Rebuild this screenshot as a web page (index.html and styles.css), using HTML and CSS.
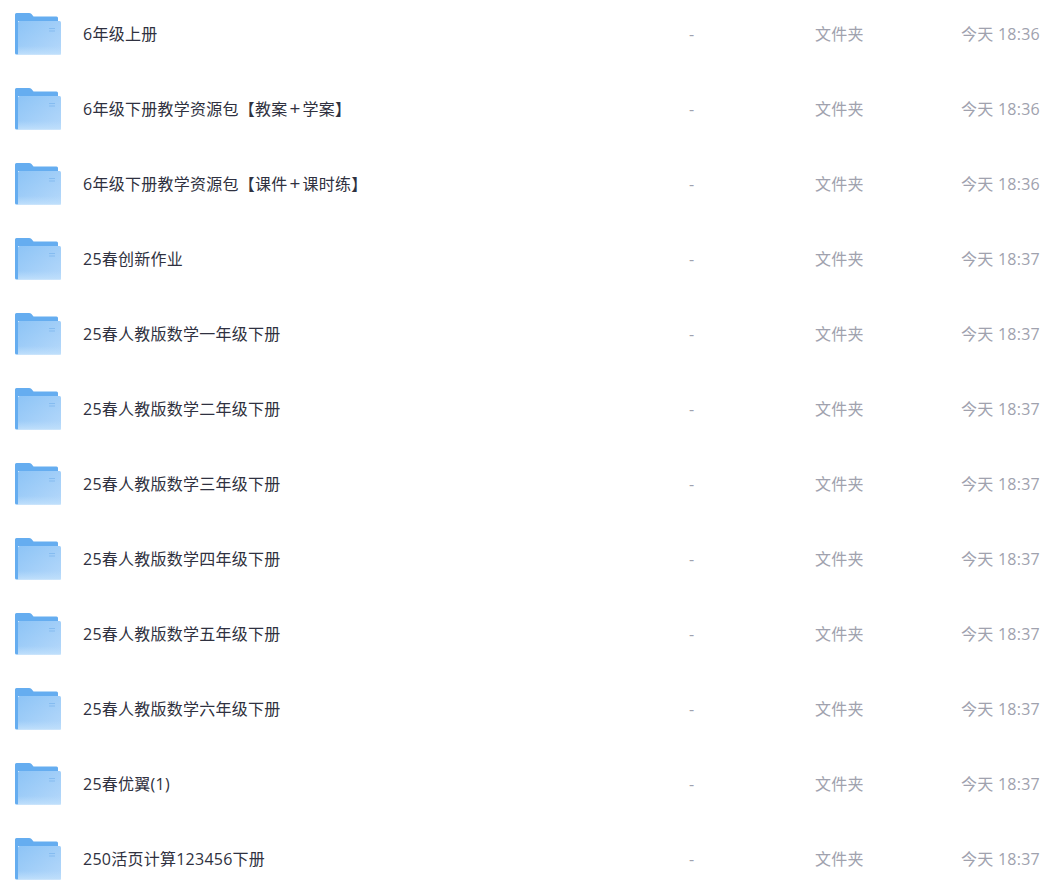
FILE: index.html
```html
<!DOCTYPE html>
<html>
    <head>
        <meta charset="utf-8"/>
        <title>文件列表</title>
        <link rel="stylesheet" href="styles.css">
    </head>
    <body>
        <svg class="sprite" width="0" height="0">
            <defs>
                <linearGradient id="folder_front" x1="0" y1="0" x2="1" y2="1">
                    <stop offset="0" stop-color="#8dc4f6"/>
                    <stop offset="1" stop-color="#b5d8fa"/>
                </linearGradient>
                <linearGradient id="folder_band" x1="0" y1="0" x2="0" y2="1">
                    <stop offset="0" stop-color="#b9dcfb" stop-opacity="0"/>
                    <stop offset="1" stop-color="#bfdffb"/>
                </linearGradient>
                <symbol id="folder" viewBox="0 0 46 42">
                    <path d="M0 1.500Q0 0 1.500 0H14Q15.500 0 16.500 1L18.500 3.500H41.500Q43 3.500 43 5V8H3V41.500H1.500Q0 41.500 0 40Z" fill="#65adf0"/>
                    <path d="M3 9.500Q3 8 4.500 8H44.500Q46 8 46 9.500V40Q46 41.500 44.500 41.500H3Z" fill="url(#folder_front)"/>
                    <rect x="3" y="33" width="43" height="8.500" fill="url(#folder_band)"/>
                    <rect x="34" y="15" width="6" height="1" fill="#85bcf0"/>
                    <rect x="34" y="17.500" width="6" height="1" fill="#85bcf0"/>
                </symbol>
            </defs>
        </svg>

        <div class="file_list">
            <div class="file_row"><svg class="folder_icon"><use href="#folder"/></svg><span class="file_name">6年级上册</span><span class="file_size">-</span><span class="file_type">文件夹</span><span class="file_time">今天 18:36</span></div>
            <div class="file_row"><svg class="folder_icon"><use href="#folder"/></svg><span class="file_name">6年级下册教学资源包【教案<span class="plus">+</span>学案】</span><span class="file_size">-</span><span class="file_type">文件夹</span><span class="file_time">今天 18:36</span></div>
            <div class="file_row"><svg class="folder_icon"><use href="#folder"/></svg><span class="file_name">6年级下册教学资源包【课件<span class="plus">+</span>课时练】</span><span class="file_size">-</span><span class="file_type">文件夹</span><span class="file_time">今天 18:36</span></div>
            <div class="file_row"><svg class="folder_icon"><use href="#folder"/></svg><span class="file_name">25春创新作业</span><span class="file_size">-</span><span class="file_type">文件夹</span><span class="file_time">今天 18:37</span></div>
            <div class="file_row"><svg class="folder_icon"><use href="#folder"/></svg><span class="file_name">25春人教版数学一年级下册</span><span class="file_size">-</span><span class="file_type">文件夹</span><span class="file_time">今天 18:37</span></div>
            <div class="file_row"><svg class="folder_icon"><use href="#folder"/></svg><span class="file_name">25春人教版数学二年级下册</span><span class="file_size">-</span><span class="file_type">文件夹</span><span class="file_time">今天 18:37</span></div>
            <div class="file_row"><svg class="folder_icon"><use href="#folder"/></svg><span class="file_name">25春人教版数学三年级下册</span><span class="file_size">-</span><span class="file_type">文件夹</span><span class="file_time">今天 18:37</span></div>
            <div class="file_row"><svg class="folder_icon"><use href="#folder"/></svg><span class="file_name">25春人教版数学四年级下册</span><span class="file_size">-</span><span class="file_type">文件夹</span><span class="file_time">今天 18:37</span></div>
            <div class="file_row"><svg class="folder_icon"><use href="#folder"/></svg><span class="file_name">25春人教版数学五年级下册</span><span class="file_size">-</span><span class="file_type">文件夹</span><span class="file_time">今天 18:37</span></div>
            <div class="file_row"><svg class="folder_icon"><use href="#folder"/></svg><span class="file_name">25春人教版数学六年级下册</span><span class="file_size">-</span><span class="file_type">文件夹</span><span class="file_time">今天 18:37</span></div>
            <div class="file_row"><svg class="folder_icon"><use href="#folder"/></svg><span class="file_name">25春优翼(1)</span><span class="file_size">-</span><span class="file_type">文件夹</span><span class="file_time">今天 18:37</span></div>
            <div class="file_row"><svg class="folder_icon"><use href="#folder"/></svg><span class="file_name">250活页计算123456下册</span><span class="file_size">-</span><span class="file_type">文件夹</span><span class="file_time">今天 18:37</span></div>
        </div>
    </body>
</html>
```

FILE: styles.css
```css
html, body {
    margin: 0;
    height: 890px;
    overflow: hidden;
    background: #fff;
}
.sprite {
    display: block;
    height: 0;
}
/* list is scrolled a little, first row starts above the window */
.file_list {
    margin-top: -3px;
    font-family: "Open Sans", "Noto Sans CJK SC", sans-serif;
    font-size: 16px;
    letter-spacing: 0.25px;
}
.file_row {
    display: grid;
    grid-template-columns: 46px 628px 126px 146px 79px;
    align-items: center;
    height: 75px;
    padding-left: 15px;
    line-height: 22px;
    color: #a0a2ae;
}
.file_row > span {
    padding-bottom: 2px;
}
.folder_icon {
    width: 46px;
    height: 42px;
    margin-bottom: 1px;
}
.file_name {
    margin-left: 22px;
    color: #2f3140;
    white-space: nowrap;
}
.plus {
    margin: 0 2px;
    font-size: 19px;
    line-height: 1;
}
.file_time {
    white-space: nowrap;
    text-align: right;
}
```
